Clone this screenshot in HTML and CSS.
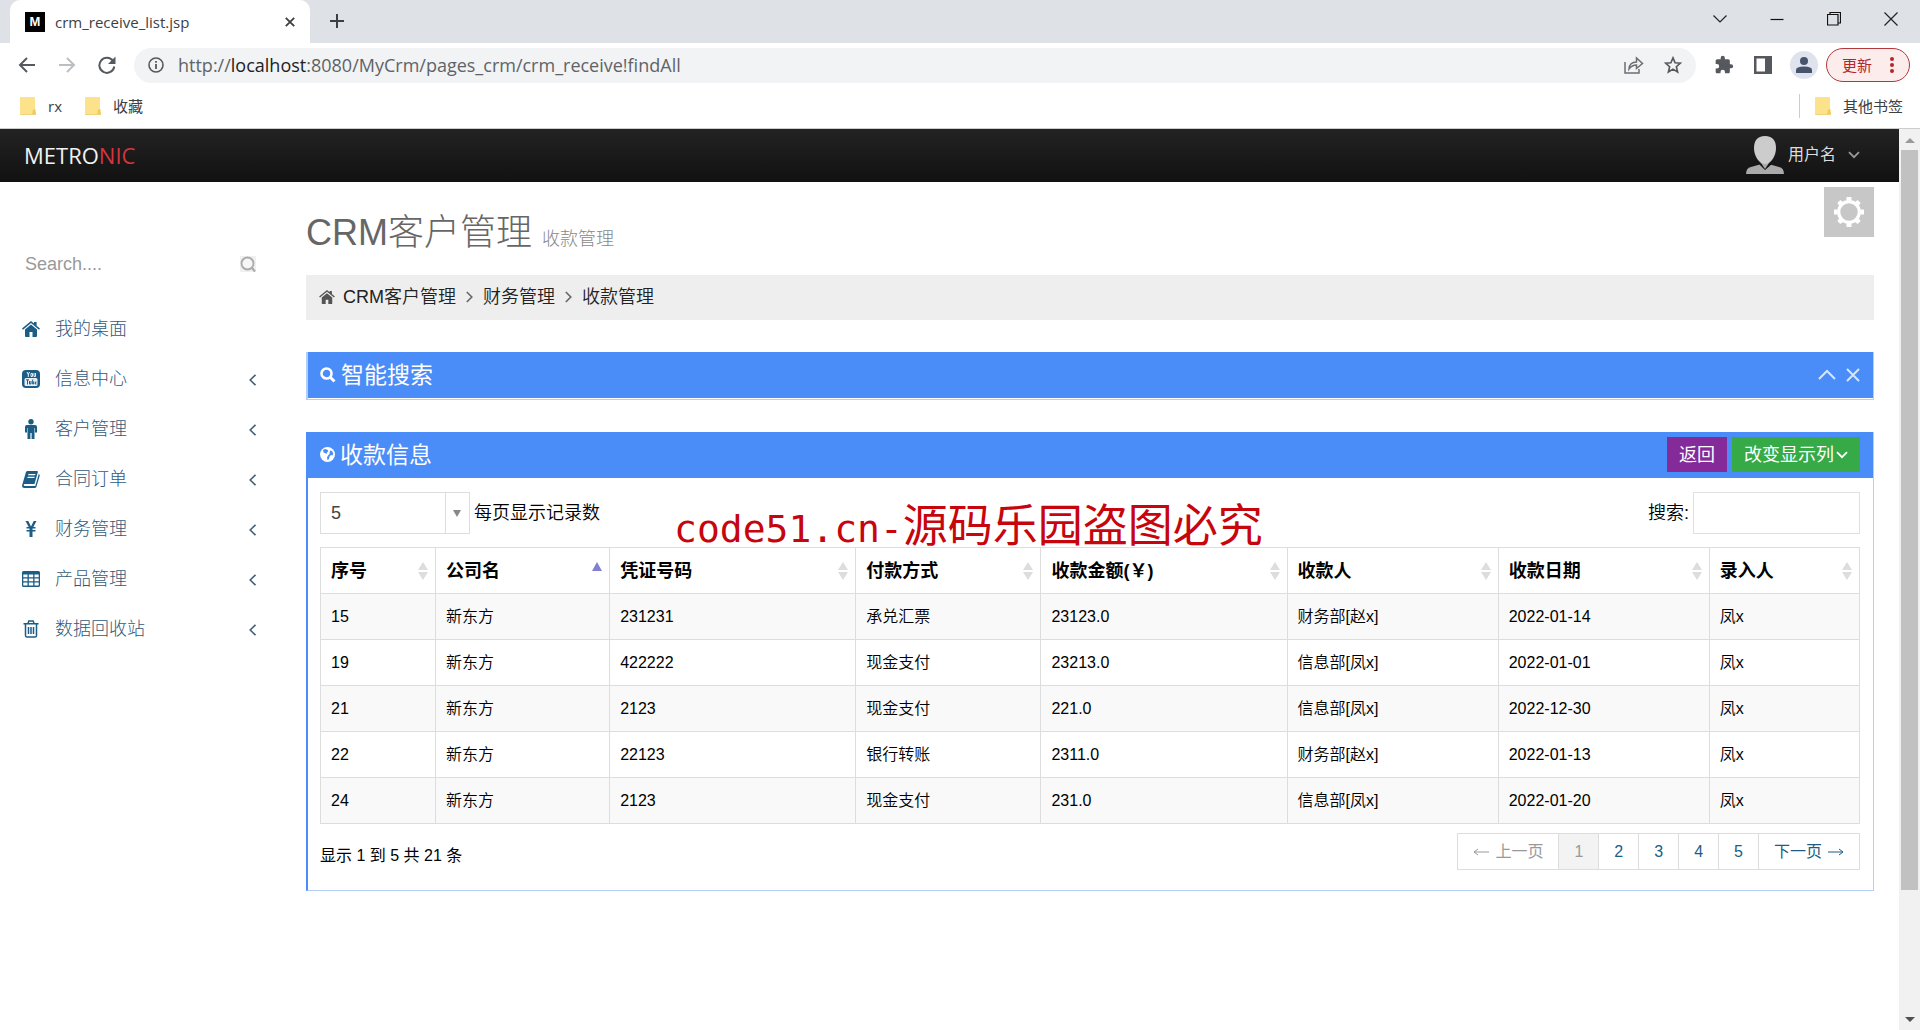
FILE: index.html
```html
<!DOCTYPE html>
<html lang="zh-CN">
<head>
<meta charset="utf-8">
<title>crm_receive_list.jsp</title>
<link rel="stylesheet" href="styles.css">
</head>
<body>
<svg class="defs" aria-hidden="true">
  <symbol id="folder" viewBox="0 0 16 18"><path d="M1 0h13q1 0 1 1v11l1 1v4q0 1-1 1H1q-1 0-1-1V1q0-1 1-1z" fill="#fbe28b"/><path d="M12 18l1-5 2-1v3l1 1v1l-1 1z" fill="#f0cb5c"/><path d="M.5 17.500h15" stroke="#efd27a" fill="none"/></symbol>
  <symbol id="home" viewBox="0 0 18 16"><path d="M9 3.600l6 5v6.400q0 1-1 1h-3.500v-5h-3v5H4q-1 0-1-1V8.600z"/><path d="M9 0l3 2.500V1h2.600v3.700L18 7.500l-1 1.200L9 2.100 1 8.700 0 7.500z"/></symbol>
  <symbol id="left" viewBox="0 0 7 12"><path d="M6.500 .8L1.200 6l5.300 5.200" fill="none" stroke="currentColor" stroke-width="1.600"/></symbol>
  <symbol id="right" viewBox="0 0 7 12"><path d="M.8 1l5 5-5 5" fill="none" stroke="currentColor" stroke-width="1.600"/></symbol>
  <symbol id="down" viewBox="0 0 12 8"><path d="M1 1.200l5 5 5-5" fill="none" stroke="currentColor" stroke-width="1.800"/></symbol>
  <symbol id="sort" viewBox="0 0 10 18"><path d="M5 0l5 8H0zM0 10h10l-5 8z"/></symbol>
  <symbol id="sort-up" viewBox="0 0 10 18"><path d="M5 0l5 9H0z"/></symbol>
</svg>

<header class="browser">
  <div class="tabstrip">
    <div class="tab">
      <span class="favicon">M</span>
      <span class="tab-title">crm_receive_list.jsp</span>
      <button class="bare" aria-label="关闭标签页"><svg width="10" height="10" viewBox="0 0 10 10"><path d="M.8 .8l8.400 8.400M9.200 .8L.8 9.200" stroke="#3c4043" stroke-width="1.800"/></svg></button>
    </div>
    <button class="bare new-tab" aria-label="新标签页"><svg width="16" height="16" viewBox="0 0 16 16"><path d="M8 1v14M1 8h14" stroke="#3c4043" stroke-width="2"/></svg></button>
    <div class="window-controls">
      <button class="bare" aria-label="搜索标签页"><svg width="14" height="8" viewBox="0 0 14 8"><path d="M.5 .5L7 7l6.500-6.500" fill="none" stroke="#222" stroke-width="1.200"/></svg></button>
      <button class="bare" aria-label="最小化"><svg width="14" height="14" viewBox="0 0 14 14"><path d="M.5 7.500h13" stroke="#111" stroke-width="1.200"/></svg></button>
      <button class="bare" aria-label="还原"><svg width="14" height="14" viewBox="0 0 14 14"><path d="M.5 2.500h10.500v10.500H.5zM3 2.500V.5h10.500v10.500H11" fill="none" stroke="#111" stroke-width="1.200"/></svg></button>
      <button class="bare" aria-label="关闭"><svg width="14" height="14" viewBox="0 0 14 14"><path d="M.5 .5l13 13M13.500 .5l-13 13" stroke="#222" stroke-width="1.200"/></svg></button>
    </div>
  </div>
  <div class="toolbar">
    <div class="nav-buttons">
      <button class="bare" aria-label="后退"><svg width="18" height="18" viewBox="0 0 18 18"><path d="M17 9H2M9 2L2 9l7 7" fill="none" stroke="#555a5f" stroke-width="2"/></svg></button>
      <button class="bare" aria-label="前进"><svg width="18" height="18" viewBox="0 0 18 18"><path d="M1 9h15M9 2l7 7-7 7" fill="none" stroke="#bcbfc2" stroke-width="2"/></svg></button>
      <button class="bare" aria-label="刷新"><svg width="18" height="18" viewBox="0 0 18 18"><path d="M15 5A7.500 7.500 0 1 0 16.300 10.500" fill="none" stroke="#555a5f" stroke-width="2"/><path d="M17.500 .5v7.500H10z" fill="#555a5f"/></svg></button>
    </div>
    <div class="omnibox">
      <svg width="16" height="16" viewBox="0 0 16 16"><circle cx="8" cy="8" r="7" fill="none" stroke="#55595e" stroke-width="1.600"/><path d="M8 7v5M8 4v1.800" stroke="#55595e" stroke-width="1.800"/></svg>
      <span class="url">http://<b>localhost</b>:8080/MyCrm/pages_crm/crm_receive!findAll</span>
      <button class="bare" aria-label="分享"><svg width="20" height="18" viewBox="0 0 20 18"><path d="M1 6v11h14v-4" fill="none" stroke="#6b6f73" stroke-width="1.500"/><path d="M5 13q.5-7 7.500-7V2l6 5.500-6 5V9Q8 9 5 13z" fill="none" stroke="#6b6f73" stroke-width="1.500"/></svg></button>
      <button class="bare" aria-label="加入书签"><svg width="18" height="18" viewBox="0 0 24 24"><path d="M12 2.500l2.800 6.500 7 .6-5.300 4.700 1.600 7L12 17.500l-6.100 3.800 1.600-7L2.200 9.600l7-.6z" fill="none" stroke="#55595e" stroke-width="2.200"/></svg></button>
    </div>
    <button class="bare" aria-label="扩展程序"><svg width="20" height="20" viewBox="0 0 24 24" fill="#55595e"><path d="M20.500 11H19V7c0-1.100-.9-2-2-2h-4V3.500a2.500 2.500 0 0 0-5 0V5H4c-1.100 0-2 .9-2 2v3.800h1.500a2.700 2.700 0 0 1 0 5.400H2V20c0 1.100.9 2 2 2h3.800v-1.500a2.700 2.700 0 0 1 5.400 0V22H17c1.100 0 2-.9 2-2v-4h1.500a2.500 2.500 0 0 0 0-5z"/></svg></button>
    <button class="bare" aria-label="侧边栏"><svg width="18" height="18" viewBox="0 0 18 18"><path d="M0 0h18v18H0zM2.500 2.500v13h8.500v-13z" fill="#55595e" fill-rule="evenodd"/></svg></button>
    <button class="bare profile" aria-label="用户"><svg width="16" height="16" viewBox="0 0 16 16" fill="#46536b"><circle cx="8" cy="4" r="4"/><path d="M0 16v-3q0-3.500 8-3.500t8 3.500v3z"/></svg></button>
    <button class="update">更新<svg width="4" height="16" viewBox="0 0 4 16" fill="#b3262a"><circle cx="2" cy="2" r="2"/><circle cx="2" cy="8" r="2"/><circle cx="2" cy="14" r="2"/></svg></button>
  </div>
  <nav class="bookmarks">
    <a href="#"><svg width="16" height="18"><use href="#folder"/></svg>rx</a>
    <a href="#"><svg width="16" height="18"><use href="#folder"/></svg>收藏</a>
    <a class="other" href="#"><svg width="16" height="18"><use href="#folder"/></svg>其他书签</a>
  </nav>
</header>

<div class="viewport">
  <div class="page">
    <header class="navbar">
      <a class="logo" href="#">METRO<span>NIC</span></a>
      <button class="user">
        <svg width="38" height="38" viewBox="0 0 38 38"><path d="M0 38q0-6 5-7l7-2q4-1 4-4h6q0 3 4 4l7 2q5 1 5 7z" fill="#aaa"/><path d="M12 27q3 2 3 0l4 6 4-6 3 1-7 6z" fill="#151515"/><path d="M19 0c8 0 11 5 11 12 0 8-5 16-11 16S8 20 8 12C8 5 11 0 19 0z" fill="#ccc"/></svg>
        用户名
        <svg class="caret" width="12" height="8"><use href="#down"/></svg>
      </button>
    </header>
    <div class="columns">
      <aside class="sidebar">
        <form class="side-search">
          <input type="text" placeholder="Search...." aria-label="Search">
          <button type="button" class="bare" aria-label="搜索"><svg width="16" height="16" viewBox="0 0 16 16"><path d="M0 0h16v16H0z" fill="#f0f0f0"/><circle cx="7.500" cy="7.500" r="6" fill="#f6f6f6" stroke="#aaa" stroke-width="1.800"/><path d="M12 12l3 3.500" stroke="#aaa" stroke-width="2.200"/></svg></button>
        </form>
        <ul class="menu">
          <li><a href="#"><svg width="18" height="16"><use href="#home"/></svg>我的桌面</a></li>
          <li><a href="#"><svg width="18" height="18" viewBox="0 0 18 18"><rect width="18" height="18" rx="4"/><rect x="2.500" y="8" width="13" height="8" rx="1.500" fill="#e8f0f5"/><path d="M5 2l1.300 2.500L7.500 2M6.300 4v3M9 3.500v3h1.500v-3zM12 3v3.500h1.500V3" fill="none" stroke="#e8f0f5"/><path d="M4 9.800h3M5.500 10v4.500M7.500 11v3h1.500v-3M10.700 9.500v4.500h1v-2.500M14.500 12h-1.200v2h1.200" fill="none" stroke="#1b5d85"/></svg>信息中心<svg class="arrow" width="7" height="12"><use href="#left"/></svg></a></li>
          <li><a href="#"><svg width="18" height="20" viewBox="0 0 18 20"><circle cx="9" cy="2.700" r="2.700"/><path d="M5 6h8q2 0 2 2v5.500h-2V9h-.5v11H9.600v-6H8.400v6H5.500V9H5v4.500H3V8q0-2 2-2z"/></svg>客户管理<svg class="arrow" width="7" height="12"><use href="#left"/></svg></a></li>
          <li><a href="#"><svg width="18" height="17" viewBox="0 0 18 17"><path d="M5.500 0H15q1.200 0 .8 1.300L12.500 13H3q-1.500 0-1.300 1.200.2.800 1.300.8h10.300L16.800 3q1.200.6.9 1.800L14.500 15.500Q14 17 12.500 17H2.500Q0 17 0 14.500L4 1q.5-1 1.500-1zM6.500 3l-.4 1.300h7L13.500 3zM5.700 5.800l-.4 1.300h7l.4-1.300z"/></svg>合同订单<svg class="arrow" width="7" height="12"><use href="#left"/></svg></a></li>
          <li><a href="#"><svg width="18" height="16" viewBox="0 0 18 16"><path d="M3.500 0h2.800L9 5.500 11.700 0h2.800L11.300 6h2.200v1.600h-3v1.300h3v1.600h-3V16h-3v-5.500h-3V8.900h3V7.600h-3V6h2.200z"/></svg>财务管理<svg class="arrow" width="7" height="12"><use href="#left"/></svg></a></li>
          <li><a href="#"><svg width="18" height="16" viewBox="0 0 18 16"><path fill-rule="evenodd" d="M1.500 0h15Q18 0 18 1.500v13q0 1.500-1.500 1.500h-15Q0 16 0 14.500v-13Q0 0 1.500 0zM1.300 3.500v2.700h4.200V3.500zm5.500 0v2.700h4.400V3.500zm5.700 0v2.700h4.200V3.500zM1.300 7.500v2.800h4.200V7.500zm5.500 0v2.800h4.400V7.500zm5.700 0v2.800h4.200V7.500zM1.300 11.600v3h4.200v-3zm5.500 0v3h4.400v-3zm5.700 0v3h4.200v-3z"/></svg>产品管理<svg class="arrow" width="7" height="12"><use href="#left"/></svg></a></li>
          <li><a href="#"><svg width="18" height="18" viewBox="0 0 18 18"><path d="M1.500 3.800h15M6 3.500l.8-2.500h4.400l.8 2.500M3.500 4v11.500q0 1.600 1.500 1.600h8q1.500 0 1.500-1.600V4M6.500 7v7M9 7v7M11.500 7v7" fill="none" stroke="#1b5d85" stroke-width="1.500"/></svg>数据回收站<svg class="arrow" width="7" height="12"><use href="#left"/></svg></a></li>
        </ul>
      </aside>

      <main class="content">
        <div class="title-row">
          <h1>CRM客户管理 <small>收款管理</small></h1>
          <button class="gear" aria-label="设置"><svg width="30" height="30" viewBox="-15 -15 30 30"><circle r="10.300" fill="none" stroke="#fff" stroke-width="3.200"/><path d="M-2.500-11.500v-3.500h5v3.500zM-2.500 11.500v3.500h5v-3.500zM-11.500-2.500H-15v5h3.500zM11.500-2.500H15v5h-3.500zM-9.700-6.200l-2-2.700 3-3 2.700 2zM9.700-6.200l2-2.700-3-3-2.700 2zM-9.700 6.200l-2 2.700 3 3 2.700-2zM9.700 6.200l2 2.700-3 3-2.700-2z" fill="#fff"/></svg></button>
        </div>
        <nav class="breadcrumb">
          <svg class="home" width="16" height="14"><use href="#home"/></svg><a href="#">CRM客户管理</a>
          <svg width="7" height="12"><use href="#right"/></svg><a href="#">财务管理</a>
          <svg width="7" height="12"><use href="#right"/></svg><a href="#">收款管理</a>
        </nav>

        <section class="portlet collapsed">
          <div class="portlet-title">
            <svg width="16" height="16" viewBox="0 0 16 16"><circle cx="6.500" cy="6.500" r="5" fill="none" stroke="#fff" stroke-width="2.600"/><path d="M10.500 10.500l4 4" stroke="#fff" stroke-width="3"/></svg>
            <h2>智能搜索</h2>
            <div class="tools">
              <button class="bare" aria-label="收起"><svg width="18" height="11" viewBox="0 0 18 11"><path d="M1 10l8-8 8 8" fill="none" stroke="#d5e6fd" stroke-width="2"/></svg></button>
              <button class="bare" aria-label="移除"><svg width="14" height="14" viewBox="0 0 14 14"><path d="M1 1l12 12M13 1L1 13" stroke="#d5e6fd" stroke-width="2"/></svg></button>
            </div>
          </div>
        </section>

        <section class="portlet">
          <div class="portlet-title">
            <svg width="15" height="15" viewBox="0 0 15 15"><circle cx="7.500" cy="7.500" r="7.500" fill="#fff"/><path d="M3 3l2-1 2 .5L8.500 4 7 5.500 6.500 7 5 6 3.500 5.500zM10 3.500l2 .5 1.300 2.500-.8 2L11 8 9.500 9.500 9 12l-1.500 1L7 10.500l1-2L9.500 7z" fill="#4b8df8"/></svg>
            <h2>收款信息</h2>
            <div class="actions">
              <button class="btn purple">返回</button>
              <button class="btn green">改变显示列<svg width="12" height="8"><use href="#down"/></svg></button>
            </div>
          </div>
          <div class="portlet-body">
            <div class="controls">
              <span class="select"><select id="size"><option>5</option><option>10</option><option>20</option></select><svg width="8" height="7" viewBox="0 0 8 7"><path d="M0 0h8L4 7z" fill="#888"/></svg></span>
              <label for="size">每页显示记录数</label>
              <label class="filter-label" for="filter">搜索:</label>
              <input class="filter" id="filter" type="text">
            </div>
            <table>
              <colgroup><col class="c-no"><col class="c-company"><col class="c-voucher"><col class="c-method"><col class="c-voucher"><col class="c-person"><col class="c-person"><col class="c-entry"></colgroup>
              <thead><tr>
                <th><div>序号<svg width="10" height="18"><use href="#sort"/></svg></div></th>
                <th><div>公司名<svg class="sorted" width="10" height="18"><use href="#sort-up"/></svg></div></th>
                <th><div>凭证号码<svg width="10" height="18"><use href="#sort"/></svg></div></th>
                <th><div>付款方式<svg width="10" height="18"><use href="#sort"/></svg></div></th>
                <th><div>收款金额(￥)<svg width="10" height="18"><use href="#sort"/></svg></div></th>
                <th><div>收款人<svg width="10" height="18"><use href="#sort"/></svg></div></th>
                <th><div>收款日期<svg width="10" height="18"><use href="#sort"/></svg></div></th>
                <th><div>录入人<svg width="10" height="18"><use href="#sort"/></svg></div></th>
              </tr></thead>
              <tbody>
                <tr><td>15</td><td>新东方</td><td>231231</td><td>承兑汇票</td><td>23123.0</td><td>财务部[赵x]</td><td>2022-01-14</td><td>凤x</td></tr>
                <tr><td>19</td><td>新东方</td><td>422222</td><td>现金支付</td><td>23213.0</td><td>信息部[凤x]</td><td>2022-01-01</td><td>凤x</td></tr>
                <tr><td>21</td><td>新东方</td><td>2123</td><td>现金支付</td><td>221.0</td><td>信息部[凤x]</td><td>2022-12-30</td><td>凤x</td></tr>
                <tr><td>22</td><td>新东方</td><td>22123</td><td>银行转账</td><td>2311.0</td><td>财务部[赵x]</td><td>2022-01-13</td><td>凤x</td></tr>
                <tr><td>24</td><td>新东方</td><td>2123</td><td>现金支付</td><td>231.0</td><td>信息部[凤x]</td><td>2022-01-20</td><td>凤x</td></tr>
              </tbody>
            </table>
            <div class="table-footer">
              <p>显示 1 到 5 共 21 条</p>
              <ul class="pages">
                <li class="off"><a href="#"><svg width="16" height="8" viewBox="0 0 16 8"><path d="M16 4H1M5 1L1 4l4 3" fill="none" stroke="currentColor"/></svg>上一页</a></li>
                <li class="off current"><a href="#">1</a></li>
                <li><a href="#">2</a></li>
                <li><a href="#">3</a></li>
                <li><a href="#">4</a></li>
                <li><a href="#">5</a></li>
                <li><a href="#">下一页<svg width="16" height="8" viewBox="0 0 16 8"><path d="M0 4h15M11 1l4 3-4 3" fill="none" stroke="currentColor"/></svg></a></li>
              </ul>
            </div>
            <div class="watermark"><span>code51.cn-</span>源码乐园盗图必究</div>
          </div>
        </section>
      </main>
    </div>
  </div>
  <div class="scrollbar" aria-hidden="true">
    <svg width="10" height="5" viewBox="0 0 10 5"><path d="M5 0l5 5H0z" fill="#999"/></svg>
    <div class="track"><div class="thumb"></div></div>
    <svg width="10" height="5" viewBox="0 0 10 5"><path d="M0 0h10L5 5z" fill="#505050"/></svg>
  </div>
</div>
</body>
</html>
```
FILE: styles.css
```css
* { box-sizing: border-box; }
body {
  margin: 0;
  min-height: 100vh;
  display: flex;
  flex-direction: column;
  background: #fff;
  color: #000;
  font: 16px/24px "Liberation Sans", "Noto Sans CJK SC", sans-serif;
}
h1, h2, p, ul { margin: 0; padding: 0; font-weight: 400; }
ul { list-style: none; }
a { color: inherit; text-decoration: none; }
button, input, select { font: inherit; color: inherit; border-radius: 0; }
button { padding: 0; border: 0; }
svg { flex: none; display: block; }
.defs { position: absolute; width: 0; height: 0; }
.bare { background: none; display: flex; align-items: center; justify-content: center; }

/* browser frame */
.browser {
  border-bottom: 1px solid #ccc;
  font-family: "Open Sans", "Noto Sans CJK SC", sans-serif;
  color: #3c4043;
}
.tabstrip { display: flex; height: 43px; padding: 0 1px 0 10px; background: #dee1e6; }
.tab {
  display: flex;
  align-items: center;
  gap: 10px;
  width: 300px;
  padding: 0 15px;
  background: #fff;
  border-radius: 10px 10px 0 0;
  font-size: 15px;
}
.favicon {
  width: 20px;
  height: 20px;
  background: #000;
  color: #fff;
  font: 700 13px/20px "Liberation Sans", sans-serif;
  text-align: center;
}
.tab-title { flex: 1; }
.new-tab { width: 54px; height: 42px; }
.window-controls { display: flex; margin-left: auto; }
.window-controls button { width: 57px; height: 37px; }
.toolbar { display: flex; align-items: center; gap: 18px; height: 44px; padding: 0 10px 0 18px; }
.nav-buttons { display: flex; gap: 22px; }
.omnibox {
  flex: 1;
  display: flex;
  align-items: center;
  gap: 20px;
  height: 35px;
  padding: 0 14px;
  background: #f1f3f4;
  border-radius: 18px;
}
.url { flex: 1; margin-left: -6px; font-size: 18px; color: #5f6368; }
.url b { font-weight: 400; color: #202124; }
.toolbar > button + button { margin-left: 2px; }
.toolbar > .profile { width: 28px; height: 28px; margin-left: 0; border-radius: 50%; background: #dee3ee; }
.toolbar > .update {
  display: flex;
  align-items: center;
  justify-content: space-between;
  width: 84px;
  height: 34px;
  margin-left: -10px;
  padding: 0 15px;
  border: 1px solid #b3383c;
  border-radius: 17px;
  background: #fcecec;
  color: #b3262a;
  font-size: 15px;
}
.bookmarks { display: flex; align-items: center; gap: 23px; height: 41px; padding: 0 17px 3px 20px; font-size: 15px; }
.bookmarks a { display: flex; align-items: center; gap: 12px; }
.bookmarks .other { margin-left: auto; padding-left: 15px; border-left: 1px solid #ccc; }

/* page */
.viewport { flex: 1; display: flex; }
.page { flex: 1; min-width: 0; }
.navbar {
  display: flex;
  align-items: center;
  justify-content: space-between;
  height: 53px;
  padding: 0 39px 1px 24px;
  background: linear-gradient(#232323, #111);
}
.logo { color: #f2f2f2; font: 22px/32px "Open Sans", sans-serif; }
.logo span { color: #d6343c; }
.user { display: flex; align-items: center; gap: 4px; background: none; color: #ddd; }
.user .caret { margin-left: 8px; color: #999; }
.columns { display: flex; }

.sidebar { width: 281px; padding: 64px 25px 0 22px; font-size: 18px; color: #33597a; }
.side-search { display: flex; align-items: center; height: 36px; }
.side-search input { flex: 1; min-width: 0; padding: 0 3px; border: 0; outline: 0; }
.side-search input::placeholder { color: #999; opacity: 1; }
.menu { padding-top: 22px; }
.menu a { display: flex; align-items: center; gap: 15px; height: 50px; font-weight: 300; fill: #1b5d85; }
.menu .arrow { margin: 2px 0 0 auto; color: #44617a; }

.content { flex: 1; min-width: 0; padding: 5px 25px 0; }
.title-row { display: flex; justify-content: space-between; height: 88px; }
h1 { padding-top: 21px; font-size: 36px; line-height: 50px; font-weight: 300; color: #666; }
h1 small { font-size: 18px; color: #888; }
.gear { display: flex; align-items: center; justify-content: center; width: 50px; height: 50px; background: #c7c7c7; }
.breadcrumb {
  display: flex;
  align-items: center;
  gap: 10px;
  height: 45px;
  margin-bottom: 32px;
  padding: 0 13px 2px;
  background: #eee;
  color: #666;
  font-size: 18px;
  font-weight: 350;
}
.breadcrumb a { color: #222; }
.breadcrumb .home { margin-right: -2px; fill: #555; }

.portlet { margin-bottom: 32px; border: 1px solid #b4cef8; border-top: 0; border-left: 2px solid #4b8df8; }
.collapsed { padding-bottom: 1px; border-left-color: #b4cef8; }
.portlet-title {
  display: flex;
  align-items: center;
  gap: 5px;
  height: 46px;
  padding: 0 13px 1px 12px;
  background: #4b8df8;
  color: #fff;
}
h2 { font-size: 23px; line-height: 32px; }
.tools, .actions { display: flex; align-items: center; gap: 10px; margin-left: auto; }
.actions { gap: 5px; }
.btn { display: flex; align-items: center; justify-content: center; gap: 2px; height: 35px; padding: 0 12px; color: #fff; font-size: 18px; }
.purple { background: #852b99; }
.green { background: #35aa47; }

.portlet-body { position: relative; padding: 14px 13px 20px 12px; }
.controls { display: flex; align-items: center; gap: 4px; margin-bottom: 13px; font-size: 18px; font-weight: 350; }
.select { position: relative; display: block; }
.select select {
  display: block;
  width: 150px;
  height: 42px;
  padding: 0 10px;
  border: 1px solid #ddd;
  background: linear-gradient(#ddd, #ddd) 124px 0 / 1px 100% no-repeat #fff;
  appearance: none;
  color: #444;
}
.select svg { position: absolute; right: 9px; top: 18px; pointer-events: none; }
.filter-label { margin-left: auto; }
.filter { width: 167px; height: 42px; border: 1px solid #e0e0e0; background: #fff; }

table { width: 100%; table-layout: fixed; border-collapse: collapse; }
.c-no { width: 115px; }
.c-company { width: 174px; }
.c-voucher { width: 246px; }
.c-method { width: 185px; }
.c-person { width: 211px; }
.c-entry { width: 150px; }
th, td { height: 46px; padding: 0 10px; border: 1px solid #ddd; text-align: left; }
th { padding-right: 7px; font-size: 18px; font-weight: 700; }
th div { display: flex; align-items: center; justify-content: space-between; }
th svg { fill: #ddd; }
th .sorted { fill: #8080d5; }
td { font-weight: 350; }
tbody tr:nth-child(odd) { background: #f9f9f9; }

.table-footer { display: flex; align-items: flex-start; justify-content: space-between; padding-top: 9px; }
.table-footer p { padding-top: 11px; }
.pages { display: flex; height: 37px; border: 1px solid #ddd; color: #1b5d85; }
.pages li + li { border-left: 1px solid #ddd; }
.pages a { display: flex; align-items: center; gap: 6px; height: 35px; padding: 0 15px; }
.pages .off { color: #999; }
.pages .current { background: #f3f3f3; }

.watermark {
  position: absolute;
  left: 366px;
  top: 15px;
  color: #c7050c;
  font: 45px/60px "Noto Sans CJK SC", sans-serif;
  white-space: nowrap;
  pointer-events: none;
}
.watermark span { font-family: "DejaVu Sans Mono", monospace; font-size: 38px; }

.scrollbar {
  display: flex;
  flex-direction: column;
  align-items: center;
  justify-content: space-between;
  width: 21px;
  padding: 9px 0 8px;
  background: #f1f1f1;
}
.track { flex: 1; width: 17px; padding: 7px 0; }
.thumb { height: 86%; background: #c1c1c1; }
```
